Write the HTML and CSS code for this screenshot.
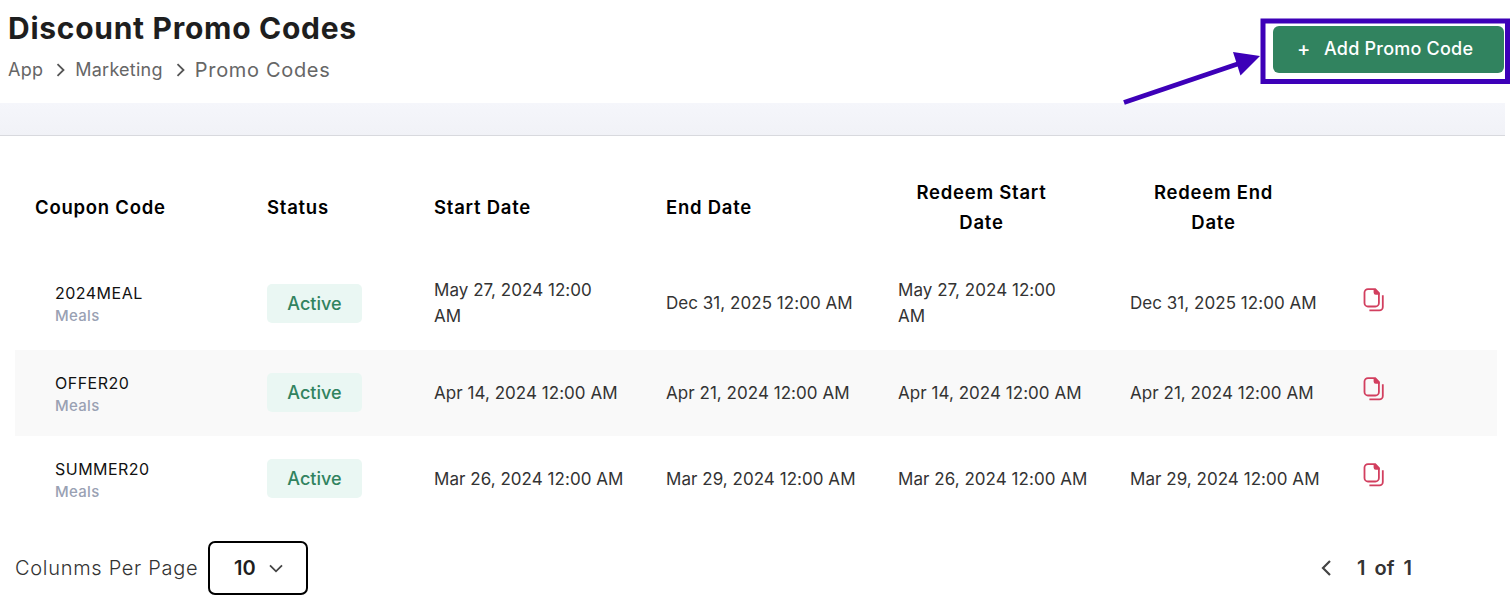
FILE: index.html
```html
<!DOCTYPE html>
<html lang="en">

<head>
    <meta charset="UTF-8">
    <meta name="viewport" content="width=device-width, initial-scale=1.0">
    <title>Discount Promo Codes</title>
    <link rel="stylesheet" href="styles.css">
</head>

<body>
    <svg width="0" height="0" class="sprite">
        <symbol id="copy" viewBox="0 0 22 26">
            <path d="M6 2.1h7.2l3.7 4v9.9a3.5 3.5 0 0 1-3.5 3.5H6a3.5 3.5 0 0 1-3.5-3.5V5.6A3.5 3.5 0 0 1 6 2.1z" />
            <path class="fold" d="M11.6 2h2l4 4v1.8h-3.8a2.2 2.2 0 0 1-2.2-2.2z" />
            <path d="M20.8 8.2v11.8a3.4 3.4 0 0 1-3.4 3.4H7.4" />
        </symbol>
    </svg>

    <header class="header">
        <div>
            <h1>Discount Promo Codes</h1>
            <nav class="breadcrumb">
                <span>App</span>
                <svg width="9" height="14" viewBox="0 0 9 14"><path d="M1.5 1.2L7.5 7l-6 5.8" /></svg>
                <span>Marketing</span>
                <svg width="9" height="14" viewBox="0 0 9 14"><path d="M1.5 1.2L7.5 7l-6 5.8" /></svg>
                <span class="current">Promo Codes</span>
            </nav>
        </div>
        <button class="add-button"><span class="plus">+</span><span>Add Promo Code</span></button>
    </header>
    <div class="strip"></div>

    <main class="card">
        <div class="row head">
            <div>Coupon Code</div>
            <div>Status</div>
            <div>Start Date</div>
            <div>End Date</div>
            <div class="two-line">Redeem Start<br>Date</div>
            <div class="two-line">Redeem End<br>Date</div>
            <div></div>
        </div>
        <div class="row tall">
            <div class="coupon"><b>2024MEAL</b><small>Meals</small></div>
            <div><span class="badge">Active</span></div>
            <div>May 27, 2024 12:00<br>AM</div>
            <div>Dec 31, 2025 12:00 AM</div>
            <div>May 27, 2024 12:00<br>AM</div>
            <div>Dec 31, 2025 12:00 AM</div>
            <div><svg class="copy" width="22" height="26"><use href="#copy" /></svg></div>
        </div>
        <div class="row striped">
            <div class="coupon"><b>OFFER20</b><small>Meals</small></div>
            <div><span class="badge">Active</span></div>
            <div>Apr 14, 2024 12:00 AM</div>
            <div>Apr 21, 2024 12:00 AM</div>
            <div>Apr 14, 2024 12:00 AM</div>
            <div>Apr 21, 2024 12:00 AM</div>
            <div><svg class="copy" width="22" height="26"><use href="#copy" /></svg></div>
        </div>
        <div class="row">
            <div class="coupon"><b>SUMMER20</b><small>Meals</small></div>
            <div><span class="badge">Active</span></div>
            <div>Mar 26, 2024 12:00 AM</div>
            <div>Mar 29, 2024 12:00 AM</div>
            <div>Mar 26, 2024 12:00 AM</div>
            <div>Mar 29, 2024 12:00 AM</div>
            <div><svg class="copy" width="22" height="26"><use href="#copy" /></svg></div>
        </div>
    </main>

    <footer class="footer">
        <span class="per-page">Colunms Per Page</span>
        <button class="select"><span>10</span>
            <svg width="14" height="9" viewBox="0 0 14 9"><path d="M1 1.3l6 6 6-6" /></svg>
        </button>
        <div class="pager">
            <svg width="10" height="16" viewBox="0 0 10 16"><path d="M9 1L2 8l7 7" /></svg>
            <span>1</span><span class="of">of</span><span>1</span>
        </div>
    </footer>

    <!-- highlight around the add button -->
    <svg class="callout" width="390" height="110" viewBox="1120 0 390 110">
        <rect x="1263" y="21" width="244.5" height="60.5" />
        <path d="M1124 102.5L1242 62.5" />
        <path class="arrow-head" d="M1233 52l27 4-19.5 19.5z" />
    </svg>
</body>

</html>
```
FILE: styles.css
```css
* {
    box-sizing: border-box;
}

body {
    margin: 0;
    height: 601px;
    overflow: hidden;
    position: relative;
    background: #fff;
    color: #333;
    font-family: Inter, 'Liberation Sans', sans-serif;
    font-size: 17px;
}

svg {
    display: block;
    flex: none;
    fill: none;
    stroke: #444;
    stroke-width: 1.8;
}

.sprite {
    position: absolute;
}

.header {
    display: flex;
    justify-content: space-between;
    height: 103px;
    padding: 7px 6px 0 8px;
}

h1 {
    margin: 0;
    font-size: 30px;
    line-height: 42px;
    font-weight: 700;
    letter-spacing: 0.72px;
    color: #1e1e1e;
    white-space: nowrap;
}

.breadcrumb {
    display: flex;
    align-items: center;
    height: 41px;
    font-size: 18px;
    letter-spacing: 0.25px;
    color: #666;
}

.breadcrumb svg {
    margin: 0 10px 0 13px;
    stroke: #555;
}

.breadcrumb .current {
    font-size: 20px;
    letter-spacing: 0.68px;
}

.add-button {
    display: flex;
    align-items: center;
    width: 231px;
    height: 47px;
    margin-top: 19px;
    padding: 0 0 2px 24px;
    border: 0;
    border-radius: 6px;
    background: #31835f;
    color: #fff;
    font: 500 18px Inter, sans-serif;
    letter-spacing: 0.22px;
    white-space: nowrap;
}

.plus {
    width: 27px;
    font-size: 20px;
    text-align: left;
}

.strip {
    width: 1505px;
    height: 33px;
    border-bottom: 1px solid #d8d9de;
    background: linear-gradient(#f5f6fb, #f1f2f7);
}

.card {
    width: 1482px;
    margin: 20px 0 0 15px;
}

.row {
    display: grid;
    grid-template-columns: 232px 167px 232px 232px 232px 232px 155px;
    align-items: center;
    height: 86px;
    line-height: 26px;
    letter-spacing: 0.04px;
    white-space: nowrap;
}

.row > div {
    padding-left: 20px;
}

.row.head {
    height: 100px;
    padding-top: 2px;
    font-size: 18.5px;
    font-weight: 600;
    line-height: 30px;
    letter-spacing: 0.75px;
    color: #000;
}

.row.head .two-line {
    padding: 0 45px 0 20px;
    text-align: center;
}

.row.tall {
    height: 94px;
}

.row.striped {
    background: #f9f9f9;
}

.row .coupon {
    padding: 2px 0 0 40px;
}

.coupon b {
    display: block;
    font-size: 16px;
    font-weight: 400;
    line-height: 24px;
    letter-spacing: 0.48px;
    color: #111;
}

.coupon small {
    display: block;
    font-size: 15px;
    font-weight: 500;
    line-height: 22px;
    letter-spacing: 0.3px;
    color: #99a1b3;
}

.badge {
    display: block;
    width: 95px;
    height: 39px;
    margin-bottom: 1px;
    border-radius: 5px;
    background: #eaf7f3;
    color: #31835f;
    font-size: 18px;
    font-weight: 500;
    line-height: 39px;
    text-align: center;
}

.tall .badge {
    margin-bottom: 0;
}

.copy {
    margin-bottom: 8px;
    stroke: #d23f5f;
}

.tall .copy {
    margin-bottom: 6px;
}

.fold {
    fill: #d23f5f;
    stroke: none;
}

.footer {
    display: flex;
    align-items: center;
    margin-top: 19px;
    padding-left: 15px;
    height: 54px;
    font-size: 20px;
}

.per-page {
    width: 193px;
    font-weight: 300;
    letter-spacing: 0.7px;
    white-space: nowrap;
}

.select {
    display: flex;
    align-items: center;
    width: 100px;
    height: 54px;
    padding: 0 0 0 24px;
    border: 2px solid #000;
    border-radius: 7px;
    background: #fff;
    color: #1e1e1e;
    font: 600 20px Inter, sans-serif;
}

.select span {
    width: 35px;
    text-align: left;
}

.pager {
    display: flex;
    align-items: center;
    margin-left: 1013px;
    font-weight: 600;
}

.pager svg {
    margin-right: 26px;
    stroke-width: 2.2;
}

.pager .of {
    margin: 0 9px;
}

.callout {
    position: absolute;
    top: 0;
    right: 0;
    stroke: #3d00b8;
    stroke-width: 5;
}

.arrow-head {
    fill: #3d00b8;
    stroke: none;
}
```
